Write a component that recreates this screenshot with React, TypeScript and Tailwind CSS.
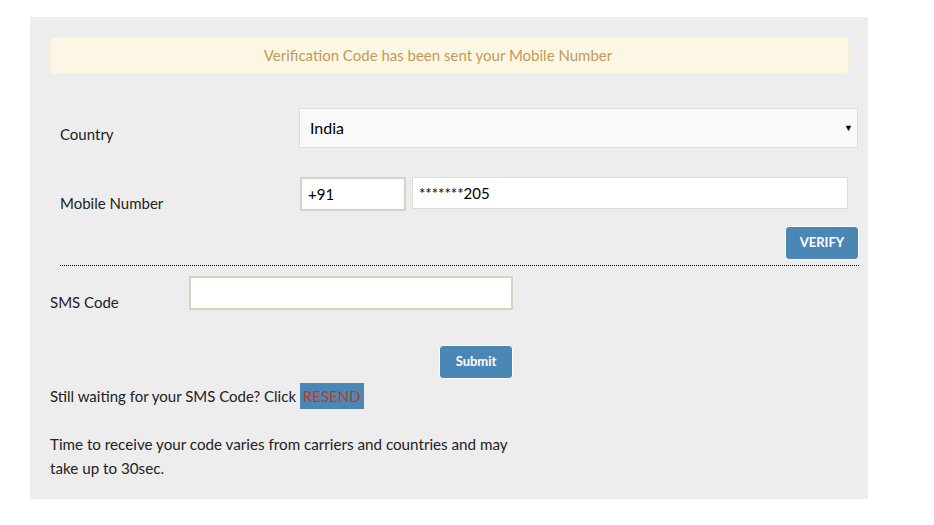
import React from "react";

export default function App() {
  return (
    <div
      className="min-h-[525px] bg-white pt-[17px] pl-[30px]"
      style={{ fontFamily: '"Source Sans Pro", Lato, "Open Sans", sans-serif' }}
    >
      <div className="w-[838px] h-[482px] bg-[#ededed] pt-[20px] pl-[20px] text-[15px] text-[#222]">
        <div className="w-[799px] h-[37px] rounded-[4px] border border-[#fbf0d6] bg-[#fcf7e4] flex items-center justify-center pr-[23px] text-[15px] text-[#c39a55]">
          Verification Code has been sent your Mobile Number
        </div>

        <div className="mt-[34px] flex h-[40px]">
          <div className="w-[249px] pl-[10px] pt-[16px] leading-[20px]">Country</div>
          <div className="w-[559px] h-[40px] bg-[#f9f9f9] border border-[#dddddd] flex items-center justify-between pl-[10px] pr-[4px] text-[16px] text-black">
            <span>India</span>
            <span className="text-[9px]">▼</span>
          </div>
        </div>

        <div className="mt-[29px] flex h-[34px]">
          <div className="w-[250px] pl-[10px] pt-[16px] leading-[20px]">Mobile Number</div>
          <div className="w-[106px] h-[34px] bg-white border-2 border-[#d6d3c1] flex items-center pl-[6px] text-[15px] text-black">
            +91
          </div>
          <div className="ml-[6px] w-[436px] h-[32px] bg-white border border-[#dddddd] flex items-center pl-[6px] text-[15px] text-black">
            *******205
          </div>
        </div>

        <div className="mt-[15px] w-[809px] flex justify-end">
          <div className="w-[74px] h-[34px] rounded-[4px] border border-white bg-[#4b87b5] flex items-center justify-center text-white text-[13px] font-bold">
            VERIFY
          </div>
        </div>

        <div className="ml-[10px] mt-[5px] w-[799px] border-t border-dotted border-black"></div>

        <div className="mt-[10px] flex h-[34px]">
          <div className="w-[139px] pt-[16px] leading-[20px]">SMS Code</div>
          <div className="w-[324px] h-[34px] bg-white border-2 border-[#d6d3c1]"></div>
        </div>

        <div className="mt-[35px] w-[463px] flex justify-end">
          <div className="w-[74px] h-[34px] rounded-[4px] border border-white bg-[#4b87b5] flex items-center justify-center text-white text-[13px] font-bold">
            Submit
          </div>
        </div>

        <div className="mt-[4px] h-[26px] flex items-center leading-[20px]">
          <span>Still waiting for your SMS Code? Click&nbsp;</span>
          <span className="h-[26px] px-[3px] bg-[#4b87b5] text-[#c0392b] flex items-center">RESEND</span>
        </div>

        <p className="mt-[23px] w-[475px] leading-[24px] text-[15.2px]">
          Time to receive your code varies from carriers and countries and may take up to 30sec.
        </p>
      </div>
    </div>
  );
}
